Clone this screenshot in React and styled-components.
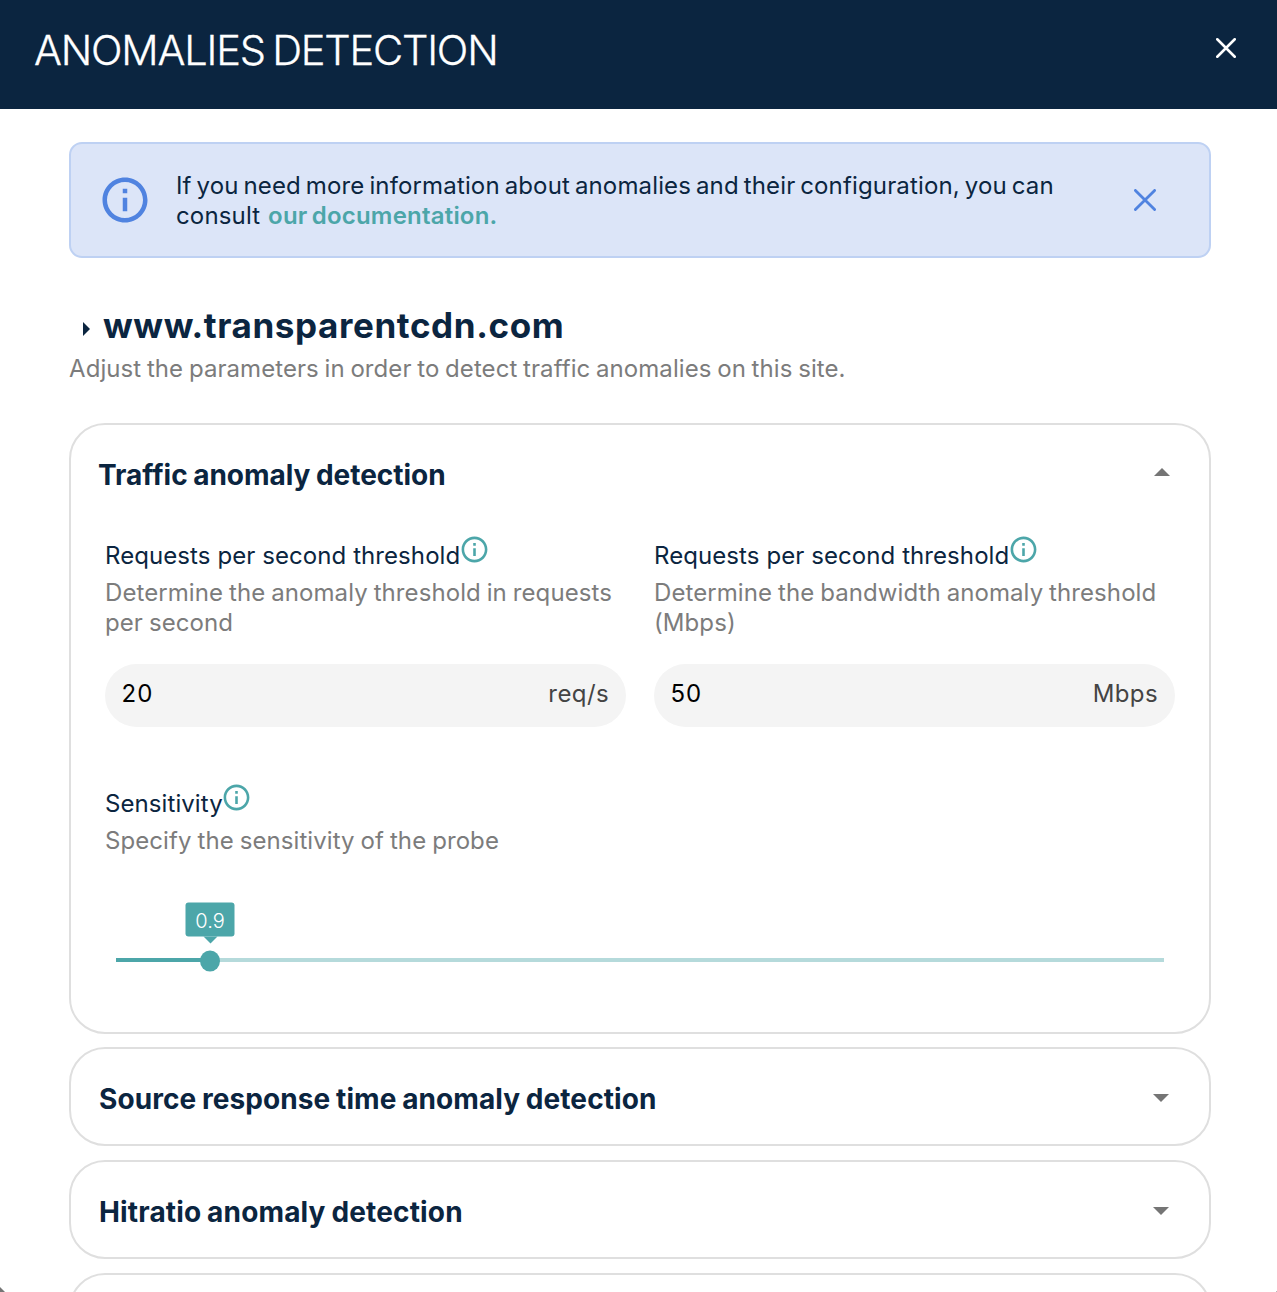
import React, { useState } from 'react';
import styled, { createGlobalStyle } from 'styled-components';

const navy = '#0b2540';
const teal = '#4ca6a9';
const blue = '#5083e0';

const GlobalStyle = createGlobalStyle`
  *, *::before, *::after { box-sizing: border-box; }
  html, body { margin: 0; height: 100%; overflow: hidden; background: #757575; }
  body { font-family: Inter, "Liberation Sans", sans-serif; color: ${navy}; }
  button { padding: 0; border: 0; background: none; color: inherit; cursor: pointer; }
`;

const Dialog = styled.main`
  height: 1292px;
  overflow: hidden;
  background: #fff;
  clip-path: polygon(0 0, 100% 0, 100% calc(100% - 1px), calc(100% - 1px) 100%, 5px 100%, 0 calc(100% - 5px));
`;

const Header = styled.header`
  display: flex;
  align-items: flex-start;
  justify-content: space-between;
  height: 109px;
  padding: 25px 41px 0 34px;
  background: ${navy};
  color: #fff;
`;

const Title = styled.h1`
  margin: 0;
  font-size: 41.5px;
  font-weight: 300;
  line-height: 50px;
  letter-spacing: -1.2px;
  word-spacing: -3px;
  -webkit-text-stroke: 0.3px #fff;
`;

const CloseButton = styled.button`
  display: flex;
  color: ${(p) => p.$color};
  margin-top: ${(p) => p.$top || 0}px;
`;

const Content = styled.div`
  display: flex;
  flex-direction: column;
  padding: 33px 66px 0 69px;
`;

const Notice = styled.section`
  display: flex;
  align-items: center;
  height: 116px;
  padding: 0 53px 0 27px;
  border: 2px solid #bed1f3;
  border-radius: 13px;
  background: #dce5f8;
`;

const NoticeText = styled.p`
  flex: 1;
  margin: 2px 0 0 24px;
  font-size: 24px;
  line-height: 30px;
  letter-spacing: 0.15px;
  word-spacing: -2px;
  white-space: nowrap;
`;

const DocLink = styled.a`
  margin-left: 3px;
  color: ${teal};
  font-weight: 600;
  letter-spacing: 0.2px;
`;

const SiteName = styled.h2`
  display: flex;
  align-items: center;
  gap: 13px;
  margin: 45px 0 0;
  padding-left: 13px;
  font-size: 35px;
  font-weight: 700;
  line-height: 44px;
  letter-spacing: 0.6px;
`;

const Marker = styled.svg`
  margin-top: 8px;
`;

const SiteHint = styled.p`
  margin: 7px 0 39px;
  color: #7c7c7c;
  font-size: 24px;
  line-height: 30px;
  letter-spacing: 0.07px;
  word-spacing: -1.1px;
`;

const Panel = styled.section`
  height: ${(p) => (p.$open ? 611 : 99)}px;
  margin-bottom: ${(p) => (p.$open ? 13 : 14)}px;
  border: 2px solid #dfdfdf;
  border-radius: 36px;
  flex: none;
`;

const PanelHead = styled.div`
  display: flex;
  align-items: center;
  justify-content: space-between;
  padding: 32px 39px 0 ${(p) => (p.$open ? 27 : 28)}px;
`;

const PanelTitle = styled.h3`
  margin: 0;
  font-size: 28px;
  font-weight: 700;
  line-height: 36px;
  letter-spacing: ${(p) => p.$spacing || 0}px;
  word-spacing: -1px;
`;

const Caret = styled.svg`
  margin: ${(p) => (p.$open ? '0 0 6px' : '0 1px 2px 0')};
`;

const PanelBody = styled.div`
  padding: 48px 34px 0;
`;

const Fields = styled.div`
  display: grid;
  grid-template-columns: 1fr 1fr;
  column-gap: 28px;
  margin-bottom: 62px;
`;

const Label = styled.div`
  display: flex;
  height: 30px;
  font-size: 24px;
  line-height: 30px;
  letter-spacing: 0.08px;
  white-space: nowrap;

  svg { margin: -7.5px 0 0 -1.3px; }
`;

const Hint = styled.p`
  min-height: ${(p) => p.$lines * 30}px;
  margin: 7px 0 0;
  color: #7c7c7c;
  font-size: 24px;
  line-height: 30px;
  letter-spacing: 0.08px;
  word-spacing: -0.9px;
`;

const InputBox = styled.div`
  display: flex;
  align-items: center;
  height: 63px;
  margin-top: 26px;
  padding: 0 17px 4px 16.5px;
  border-radius: 32px;
  background: #f4f4f4;
`;

const NumberInput = styled.input`
  flex: 1;
  min-width: 0;
  padding: 0;
  border: 0;
  outline: 0;
  background: none;
  color: #000;
  font: 400 24px/30px Inter, sans-serif;
  letter-spacing: 1px;
`;

const Unit = styled.span`
  color: #444;
  font-size: 24px;
  line-height: 30px;
  letter-spacing: 0.4px;
`;

const Slider = styled.div`
  position: relative;
  height: 4px;
  margin: 102px 11px 0;
  background: #b5dadb;
`;

const Filled = styled.div`
  height: 100%;
  background: ${teal};
`;

const Thumb = styled.div`
  position: absolute;
  top: 2.5px;
  width: 20px;
  height: 21px;
  border-radius: 50%;
  background: ${teal};
  transform: translate(-50%, -50%);
`;

const ValueTip = styled.div`
  position: absolute;
  left: 50%;
  bottom: 35px;
  width: 49px;
  padding-top: 2px;
  border-radius: 3px;
  background: ${teal};
  color: #fff;
  font-size: 20px;
  font-weight: 300;
  line-height: 32px;
  text-align: center;
  transform: translateX(-50%);

  &::after {
    content: '';
    position: absolute;
    top: 100%;
    left: calc(50% - 7px);
    border: 7px solid transparent;
    border-top-color: ${teal};
    border-bottom: 0;
  }
`;

const InfoIcon = ({ size, color }) => (
  <svg width={size} height={size} viewBox="0 0 24 24" fill={color}>
    <path d="M11 7h2v2h-2zm0 4h2v6h-2zm1-9C6.48 2 2 6.48 2 12s4.48 10 10 10 10-4.48 10-10S17.52 2 12 2zm0 18c-4.41 0-8-3.59-8-8s3.59-8 8-8 8 3.59 8 8-3.59 8-8 8z" />
  </svg>
);

const Cross = ({ size }) => (
  <svg width={size} height={size} viewBox="0 0 22 22" stroke="currentColor" strokeWidth="2.8" strokeLinecap="round">
    <path d="M1.4 1.4 20.6 20.6M20.6 1.4 1.4 20.6" />
  </svg>
);

function Field({ label, hint, unit, initial }) {
  const [value, setValue] = useState(initial);
  return (
    <div>
      <Label>{label}<InfoIcon size={31} color={teal} /></Label>
      <Hint $lines={2}>{hint}</Hint>
      <InputBox>
        <NumberInput value={value} onChange={(e) => setValue(e.target.value)} />
        <Unit>{unit}</Unit>
      </InputBox>
    </div>
  );
}

function PanelHeader({ title, open, spacing }) {
  return (
    <PanelHead $open={open}>
      <PanelTitle $spacing={spacing}>{title}</PanelTitle>
      <Caret $open={open} width="16" height="8" viewBox="0 0 16 8" fill="#757575">
        <path d={open ? 'M0 8 8 0l8 8z' : 'M0 0h16L8 8z'} />
      </Caret>
    </PanelHead>
  );
}

export default function App() {
  const position = 8.97;
  return (
    <>
      <GlobalStyle />
      <Dialog>
        <Header>
          <Title>ANOMALIES DETECTION</Title>
          <CloseButton $color="#fff" $top={13} aria-label="Close"><Cross size={20} /></CloseButton>
        </Header>
        <Content>
          <Notice>
            <InfoIcon size={54} color={blue} />
            <NoticeText>
              If you need more information about anomalies and their configuration, you can<br />
              consult <DocLink>our documentation.</DocLink>
            </NoticeText>
            <CloseButton $color={blue} aria-label="Dismiss"><Cross size={22} /></CloseButton>
          </Notice>
          <SiteName>
            <Marker width="8" height="14" viewBox="0 0 8 14" fill={navy}><path d="M1 0 8 7 1 14z" /></Marker>
            www.transparentcdn.com
          </SiteName>
          <SiteHint>Adjust the parameters in order to detect traffic anomalies on this site.</SiteHint>
          <Panel $open>
            <PanelHeader title="Traffic anomaly detection" open spacing={-0.03} />
            <PanelBody>
              <Fields>
                <Field label="Requests per second threshold" hint="Determine the anomaly threshold in requests per second" unit="req/s" initial="20" />
                <Field label="Requests per second threshold" hint="Determine the bandwidth anomaly threshold (Mbps)" unit="Mbps" initial="50" />
              </Fields>
              <Label>Sensitivity<InfoIcon size={31} color={teal} /></Label>
              <Hint $lines={1}>Specify the sensitivity of the probe</Hint>
              <Slider>
                <Filled style={{ width: `${position}%` }} />
                <Thumb style={{ left: `${position}%` }}><ValueTip>0.9</ValueTip></Thumb>
              </Slider>
            </PanelBody>
          </Panel>
          <Panel><PanelHeader title="Source response time anomaly detection" spacing={0.08} /></Panel>
          <Panel><PanelHeader title="Hitratio anomaly detection" spacing={0.16} /></Panel>
          <Panel />
        </Content>
      </Dialog>
    </>
  );
}
